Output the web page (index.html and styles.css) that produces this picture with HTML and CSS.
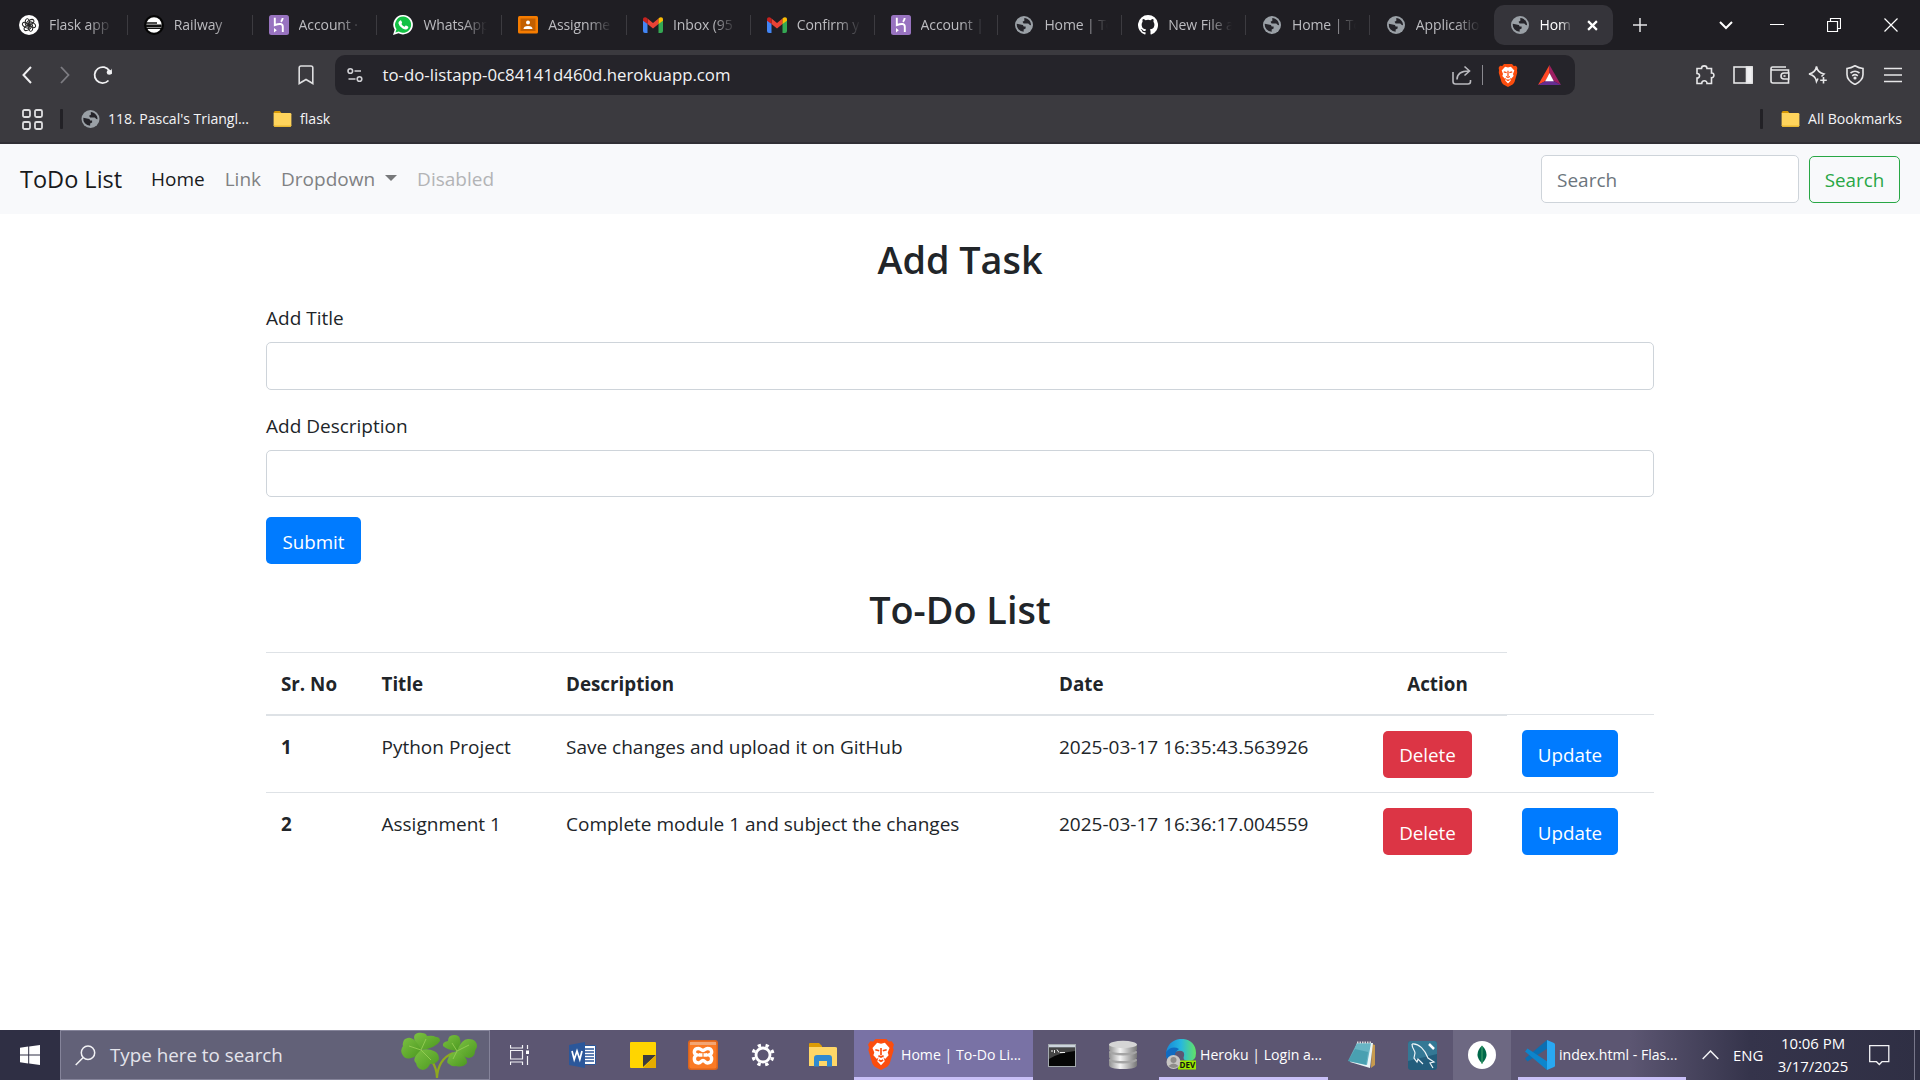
FILE: index.html
```html
<!DOCTYPE html>
<html lang="en">
<head>
<meta charset="utf-8">
<title>Home | To-Do List</title>
<link rel="stylesheet" href="styles.css">
</head>
<body>
<svg class="defs" aria-hidden="true">
  <symbol id="globe" viewBox="0 0 20 20"><circle cx="10" cy="10" r="10" fill="#9aa0a6"/><path d="M2 8.500 8.800 10l.8 1.800h2.200v2.200l-2.200 1v2.600A8 8 0 0 1 2 8.500M10.300 2.200c4.600.4 7.600 4 7.500 8l-1.300-.1-1.800-1.700H9.500L8.400 6.300l2-1.100z" fill="#25242a"/></symbol>
  <symbol id="heroku" viewBox="0 0 20 20"><rect width="20" height="20" rx="2.500" fill="#9873c0"/><path d="M5.800 2.800v7.400c5-2 8-1.600 8 1.500V17M13.700 3c-.1 1.500-.7 2.600-1.700 3.800" fill="none" stroke="#fff" stroke-width="1.900"/><path d="m5 13 2.800 2.200L5 17.400z" fill="#fff"/></symbol>
  <symbol id="gmail" viewBox="0 0 20 16"><path d="M0 3v11q0 2 2 2h2.500V6z" fill="#4285f4"/><path d="M20 3v11q0 2-2 2h-2.500V6z" fill="#34a853"/><path d="M4.500 1.500 10 6l5.500-4.500V7L10 11.500 4.500 7z" fill="#ea4335"/><path d="M0 2.500C0 0 2.500-.6 4.500 1.500V7L0 3.800z" fill="#c5221f"/><path d="M20 2.500c0-2.500-2.500-3.100-4.500-1V7L20 3.800z" fill="#fbbc04"/></symbol>
  <symbol id="folder" viewBox="0 0 20 18"><path d="M0 2q0-2 2-2h5l2 2.500H0z" fill="#d99a06"/><path d="M0 2.200h18.500q1.500 0 1.500 1.500v12.300q0 2-2 2H2q-2 0-2-2z" fill="#ffd45c"/><path d="M0 15.500q0 2.500 2 2.500h16q2 0 2-2v-.6q-.6 1-2 1H2q-1.500 0-2-.9" fill="#e9b832"/></symbol>
  <symbol id="brave" viewBox="0 0 20 24"><path d="M5.800 0h8.400l1.800 2 2.300-.3L20 4.300l-.7 2.200.5 2-3 10.300q-.5 1.500-2 2.600L10 24l-4.800-2.600q-1.500-1.100-2-2.600L.2 8.500l.5-2L0 4.300 1.700 1.700 4 2z" fill="#fb4d0e"/><path d="m10 3.600 3-.7 3.600 4-1.400 3.600.7 2-2.700 3-1.300-1.300 1 3L10 20.400 7.100 17.200l1-3-1.300 1.300-2.700-3 .7-2L3.400 6.900l3.600-4z" fill="#fff"/><path d="m5.600 8.300 3 .8M14.400 8.300l-3 .8M10 7v5.500M8 13l2 1 2-1M8.300 16.200l1.700 1 1.700-1" stroke="#fb4d0e" stroke-width="1.300" fill="none"/></symbol>
</svg>

<div class="browser">
  <div class="tabs">
    <div class="tab wide"><svg class="fav" viewBox="0 0 20 20"><circle cx="10" cy="10" r="10" fill="#fff"/><g fill="none" stroke="#222" stroke-width="1"><ellipse cx="8.300" cy="7.500" rx="2.200" ry="3.900"/><ellipse cx="8.300" cy="7.500" rx="2.200" ry="3.900" transform="rotate(60 10 10)"/><ellipse cx="8.300" cy="7.500" rx="2.200" ry="3.900" transform="rotate(120 10 10)"/><ellipse cx="8.300" cy="7.500" rx="2.200" ry="3.900" transform="rotate(180 10 10)"/><ellipse cx="8.300" cy="7.500" rx="2.200" ry="3.900" transform="rotate(240 10 10)"/><ellipse cx="8.300" cy="7.500" rx="2.200" ry="3.900" transform="rotate(300 10 10)"/></g></svg><span>Flask app</span></div>
    <div class="tab wide"><svg class="fav" viewBox="0 0 20 20"><circle cx="10" cy="10" r="10" fill="#050505"/><circle cx="10" cy="10" r="7.700" fill="#fff"/><path d="M2 8h11M2 10.200h15v1.300H2M3 13.300h14" stroke="#111" stroke-width="1.300" fill="none"/></svg><span>Railway</span></div>
    <div class="tab wide"><svg class="fav"><use href="#heroku"/></svg><span>Account ·</span></div>
    <div class="tab wide"><svg class="fav" viewBox="0 0 20 20"><path d="M10.300 0a9.700 9.700 0 1 1-4.800 18.200L0 20l1.700-5.300A9.700 9.700 0 0 1 10.300 0" fill="#fff"/><path d="M10.300 1.600a8.100 8.100 0 1 1-4.500 15l-3.400 1 1.100-3.300a8.100 8.100 0 0 1 6.800-12.700" fill="#12c143"/><path d="M7.200 5.400q.8-.3 1.200.6l.7 1.500q.2.500-.7 1.400 1.200 2.200 3.200 2.900l1-1.200q.3-.3 2.400.8 1 .6-.2 2.200-1.700 1.800-5.200-.2-3.600-2.200-4.200-5.200-.1-1.900 1.800-2.800" fill="#fff"/></svg><span>WhatsApp</span></div>
    <div class="tab wide"><svg class="fav" viewBox="0 0 20 20"><rect y="1" width="20" height="17.500" rx="1.500" fill="#f57c00"/><rect x="2.500" y="3.500" width="15" height="12.500" fill="#c35f00"/><circle cx="10" cy="7.500" r="2" fill="#fff"/><path d="M5.500 14q0-3 4.500-3t4.500 3z" fill="#fff"/></svg><span>Assignme</span></div>
    <div class="tab"><svg class="fav mail"><use href="#gmail"/></svg><span>Inbox (95</span></div>
    <div class="tab"><svg class="fav mail"><use href="#gmail"/></svg><span>Confirm y</span></div>
    <div class="tab"><svg class="fav"><use href="#heroku"/></svg><span>Account |</span></div>
    <div class="tab"><svg class="fav globe"><use href="#globe"/></svg><span>Home | To</span></div>
    <div class="tab"><svg class="fav" viewBox="0 0 16 16"><path fill="#fff" d="M8 0a8 8 0 0 0-2.530 15.590c.4.070.55-.17.55-.38v-1.490c-2.230.48-2.700-.95-2.700-.95-.36-.92-.89-1.170-.89-1.170-.73-.5.060-.49.060-.49.800.060 1.230.830 1.230.830.710 1.220 1.870.870 2.330.660.070-.52.280-.87.510-1.070-1.780-.2-3.640-.89-3.640-3.950 0-.87.310-1.590.820-2.150-.08-.2-.36-1.020.080-2.120 0 0 .67-.21 2.200.820a7.600 7.600 0 0 1 4 0c1.530-1.040 2.200-.82 2.200-.82.440 1.100.160 1.920.080 2.120.510.560.820 1.270.820 2.150 0 3.070-1.870 3.750-3.650 3.950.29.250.540.730.540 1.480v2.200c0 .21.150.46.550.38A8 8 0 0 0 8 0"/></svg><span>New File a</span></div>
    <div class="tab"><svg class="fav globe"><use href="#globe"/></svg><span>Home | To</span></div>
    <div class="tab plain"><svg class="fav globe"><use href="#globe"/></svg><span>Applicatio</span></div>
    <div class="tab active"><svg class="fav globe"><use href="#globe"/></svg><span>Hom</span><svg class="x" viewBox="0 0 10 10"><path d="m1 1 8 8M9 1 1 9" stroke="#fff" stroke-width="2"/></svg></div>
    <svg class="plus" viewBox="0 0 14 14"><path d="M7 0v14M0 7h14" stroke="#e4e4e6" stroke-width="1.500"/></svg>
    <div class="window-controls">
      <svg width="14" height="9" viewBox="0 0 14 9"><path d="m1 1 6 6 6-6" stroke="#fff" stroke-width="2" fill="none"/></svg>
      <svg width="14" height="14" viewBox="0 0 14 14"><path d="M0 6.500h14" stroke="#fff"/></svg>
      <svg width="14" height="14" viewBox="0 0 14 14"><path d="M.5 3.500h10v10H.5zM3.500 3.500v-3h10v10h-3" stroke="#fff" stroke-width="1.200" fill="none"/></svg>
      <svg width="14" height="14" viewBox="0 0 14 14"><path d="m.5.5 13 13M13.500.5l-13 13" stroke="#fff" stroke-width="1.200"/></svg>
    </div>
  </div>

  <div class="toolbar">
    <div class="nav-buttons">
      <svg width="12" height="18" viewBox="0 0 12 18"><path d="M10 1 2.500 9l7.500 8" stroke="#f0f0f2" stroke-width="2" fill="none"/></svg>
      <svg width="12" height="18" viewBox="0 0 12 18"><path d="m2 1 7.500 8L2 17" stroke="#7d7c82" stroke-width="1.800" fill="none"/></svg>
      <svg width="20" height="20" viewBox="0 0 20 20"><path d="M15.500 15.500A8 8 0 1 1 16.500 6" stroke="#f0f0f2" stroke-width="1.800" fill="none"/><circle cx="16.300" cy="7.300" r="2.500" fill="#f0f0f2"/><path d="M18.800 3.600V9h-3z" fill="#f0f0f2"/></svg>
    </div>
    <svg class="mark" width="16" height="20" viewBox="0 0 16 20"><path d="M3 1h10q1.800 0 1.800 1.800V18.500L8 14.500 1.200 18.500V2.800Q1.200 1 3 1z" fill="none" stroke="#dedee0" stroke-width="1.600"/></svg>
    <div class="address">
      <svg class="tune" width="16" height="16" viewBox="0 0 16 16"><g fill="none" stroke="#d0d0d4" stroke-width="1.600"><circle cx="3.300" cy="4" r="2.300"/><path d="M7.500 4H14M1.500 12h7"/><circle cx="12.500" cy="12" r="2.300"/></g></svg>
      <span class="url">to-do-listapp-0c84141d460d.herokuapp.com</span>
      <svg class="share" width="20" height="20" viewBox="0 0 20 20"><path d="M1 7v9.500Q1 19 3.500 19H16q2.500 0 2.500-2.500V15M5 14.500C5 8.500 9 6 17 6M12.500 1.500 17.500 6l-5 4.500" fill="none" stroke="#b9b9be" stroke-width="1.600"/></svg>
      <i class="rule"></i>
      <svg class="lion" width="20" height="23" viewBox="0 0 20 24"><use href="#brave"/></svg>
      <svg width="23" height="20" viewBox="0 0 23 20"><path d="M11.500 0 0 20l7.500-4 4-8z" fill="#ff4724"/><path d="M11.500 0 23 20l-7.500-4-4-8z" fill="#9e1f63"/><path d="M0 20h23l-7.500-4h-8z" fill="#662d91"/><path d="m11.500 8 4.300 8.200H7.200z" fill="#fff"/></svg>
    </div>
    <div class="extensions">
      <svg width="20" height="20" viewBox="0 0 20 20"><path d="M2 3.500h4.500C6.500 0 12 0 12 3.500h4.500V8c3.200-.5 3.200 5 0 4.700V18.500H12c.3-3.600-5.300-3.600-5.300 0H2V13c3.400.2 3.400-4.700 0-4.500z"/></svg>
      <svg width="20" height="20" viewBox="0 0 20 20"><rect x="1" y="2" width="18" height="16"/><path d="M13.500 2H19v16h-5.500z" fill="#f0f0f2"/></svg>
      <svg width="20" height="20" viewBox="0 0 20 20"><path d="M18.500 8V5h-16Q1 5 1 3.500T2.500 2H16M1 3.500V16q0 2 2 2h15.500v-4M18.800 8v6H14q-3 0-3-3t3-3z"/><path d="M13.500 11h2"/></svg>
      <svg width="20" height="20" viewBox="0 0 20 20"><path d="M13.500 11.500 16 9Q9.500 7.500 8.500 1.500 7.500 7.500 1 9q6.500 1.500 7.500 7.500l1.500-3M15.500 12v6.500M12.200 15.200h6.600"/></svg>
      <svg width="20" height="20" viewBox="0 0 20 20"><path d="M10 .8q4 2.400 8 2.700v6q0 6-8 10-8-4-8-10v-6q4-.3 8-2.700z"/><path d="M5.500 8q4.500-3.500 9 0M7.200 10.800q2.800-2.300 5.600 0"/><circle cx="10" cy="13" r=".8"/></svg>
      <svg width="20" height="20" viewBox="0 0 20 20"><path d="M1 3.500h18M1 10h18M1 16.500h18"/></svg>
    </div>
  </div>

  <div class="bookmarks">
    <svg width="21" height="21" viewBox="0 0 21 21"><g fill="none" stroke="#dedee0" stroke-width="1.800"><rect x="1" y="1" width="7" height="7" rx="1.500"/><rect x="13" y="1" width="7" height="7" rx="1.500"/><rect x="1" y="13" width="7" height="7" rx="1.500"/><rect x="13" y="13" width="7" height="7" rx="1.500"/></g></svg>
    <i class="bar"></i>
    <svg class="bm-globe"><use href="#globe"/></svg>
    <span class="bm-pascal">118. Pascal's Triangl...</span>
    <svg class="bm-folder"><use href="#folder"/></svg>
    <span>flask</span>
    <div class="bm-right"><i class="bar"></i><svg class="bm-folder"><use href="#folder"/></svg><span class="bm-all">All Bookmarks</span></div>
  </div>
</div>

<div class="page">
  <nav class="navbar">
    <a class="brand">ToDo List</a>
    <a class="link current">Home</a>
    <a class="link">Link</a>
    <a class="link drop">Dropdown</a>
    <a class="link disabled">Disabled</a>
    <form class="search-form">
      <input type="text" placeholder="Search">
      <button type="button" class="btn outline">Search</button>
    </form>
  </nav>

  <main class="container">
    <h2>Add Task</h2>
    <form class="task-form">
      <label for="title">Add Title</label>
      <input id="title" type="text">
      <label for="desc">Add Description</label>
      <input id="desc" type="text">
      <button type="button" class="btn primary submit">Submit</button>
    </form>
    <h2 class="list-title">To-Do List</h2>
    <table>
      <colgroup><col class="c1"><col class="c2"><col class="c3"><col class="c4"><col class="c5"><col class="c6"></colgroup>
      <thead>
        <tr><th>Sr. No</th><th>Title</th><th>Description</th><th>Date</th><th class="action">Action</th></tr>
      </thead>
      <tbody>
        <tr><th>1</th><td>Python Project</td><td>Save changes and upload it on GitHub</td><td class="date">2025-03-17 16:35:43.563926</td><td><button type="button" class="btn danger">Delete</button></td><td><button type="button" class="btn primary update">Update</button></td></tr>
        <tr><th>2</th><td>Assignment 1</td><td>Complete module 1 and subject the changes</td><td class="date">2025-03-17 16:36:17.004559</td><td><button type="button" class="btn danger">Delete</button></td><td><button type="button" class="btn primary update">Update</button></td></tr>
      </tbody>
    </table>
  </main>
</div>

<div class="taskbar">
  <div class="start"><svg width="20" height="20" viewBox="0 0 20 20"><path d="M0 2.800 8.200 1.600v7.800H0zM9.200 1.400 20 0v9.400H9.200zM0 10.400h8.200v8L0 17.200zM9.200 10.400H20V20L9.200 18.500z" fill="#fff"/></svg></div>
  <div class="search">
    <svg width="21" height="21" viewBox="0 0 21 21"><circle cx="13" cy="7.700" r="6.700" fill="none" stroke="#f2f2f5" stroke-width="1.500"/><path d="M8.200 12.500.7 20" stroke="#f2f2f5" stroke-width="1.500"/></svg>
    <span>Type here to search</span>
    <svg class="clover" width="76" height="46" viewBox="0 0 76 46">
      <defs><linearGradient id="leaf" x1="0" y1="0" x2="1" y2="1"><stop offset="0" stop-color="#7cc142"/><stop offset="1" stop-color="#4b981f"/></linearGradient></defs>
      <path d="M30 28q6 8 6 18M52 21Q37 27 36 46" fill="none" stroke="#8fa81f" stroke-width="2.200"/>
      <g fill="url(#leaf)"><path d="M20 18C8 4 14 0 21 1q4 0 5 3 6-1 9 1 4 0 4 4-4 7-19 9"/><path d="M20 18C14 4 7 4 3 8q-2 4-1 6-3 4-1 8 3 6 9 4 6-1 10-8"/><path d="M20 18q-10 9-5 13 1 6 7 7 5-1 7-6 7 0 9-5 0-6-5-8-6-3-13-1"/>
      <path d="M56 19Q46 18 42 14q-1-4 5-5 0-6 6-6 6 0 6 5 2 3-3 11"/><path d="M56 19q5-13 12-12 8 0 8 8-1 2-2 4 0 6-6 7-5 0-12-7"/><path d="M56 19q-8 2-9 8-2 4 1 5 3 3 7 2 7 2 11-3 1-6-10-12"/></g>
      <path d="m20 18 5-11M20 18 8 14M20 18l10 10M56 19l-5-8M56 19l12-6M56 19l-4 8" stroke="#9bd158" stroke-width=".8"/>
    </svg>
  </div>
  <div class="apps">
    <svg class="i1" width="20" height="20" viewBox="0 0 20 20"><path d="M.5 0v3h12V0M.5 20v-3h12v3M.5 5.500h12v8.500H.5zM17.500 0v4M17.500 11v9" fill="none" stroke="#f2f2f5" stroke-width="1.200"/><path d="M16 5.500h3v3.500h-3z" fill="#fff"/></svg>
    <svg class="i2" width="28" height="26" viewBox="0 0 28 26"><path d="M15 3.500h11.500v19H15z" fill="#fff" stroke="#2b579a"/><path d="M16 7h9M16 10h9M16 13h9M16 16h9M16 19h9" stroke="#2b579a" stroke-width="1.300"/><path d="M0 3 16 0v26L0 23z" fill="#2b579a"/><path d="m3 9 2.200 8.500L8 9l2.800 8.500L13 9" fill="none" stroke="#fff" stroke-width="1.700"/></svg>
    <svg class="i3" width="26" height="26" viewBox="0 0 26 26"><rect width="26" height="26" rx="1" fill="#ffd500"/><path d="M13 13h13L13 25z" fill="#3b3b3d"/><path d="M26 13v13H13z" fill="#e5ac00"/></svg>
    <svg class="i4" width="30" height="30" viewBox="0 0 30 30"><rect width="30" height="30" rx="3" fill="#d8641f"/><rect x="1.500" y="1.500" width="27" height="27" rx="2" fill="#fb7a24"/><path d="M2 2h26v3H2z" fill="#f3a573"/><path d="M10.500 8.500c2.500 0 2.500 2 4.500 2s2-2 4.500-2c5 0 5.500 5.500 1.500 6.500 4 1.500 3.500 8-1.500 8-2.500 0-2.500-2.500-4.500-2.500s-2 2.500-4.500 2.500c-5 0-5.500-6.500-1.500-8-4-1-3.500-6.500 1.500-6.500zM11 15h3.500M15.500 15H19" fill="none" stroke="#fff" stroke-width="3.400"/></svg>
    <svg class="i5" width="24" height="24" viewBox="0 0 24 24"><circle cx="12" cy="12" r="7" fill="none" stroke="#fff" stroke-width="2.800"/><circle cx="12" cy="12" r="10" fill="none" stroke="#fff" stroke-width="3.200" stroke-dasharray="3.300 4.554" transform="rotate(13 12 12)"/></svg>
    <svg class="i6" width="28" height="24" viewBox="0 0 28 24"><path d="M0 1q0-1 1-1h9l3 3v4H0z" fill="#dc9c05"/><path d="M0 4h26q2 0 2 1v18H0z" fill="#ffd767"/><path d="M5 23.500V15q0-3 3-3h12q3 0 3 3v8.500h-5V18h-8v5.500z" fill="#318ad0"/></svg>
    <div class="task current"><svg width="26" height="31" viewBox="0 0 20 24"><use href="#brave"/></svg><span>Home | To-Do Li...</span></div>
    <svg class="i7" width="28" height="23" viewBox="0 0 28 23"><rect x=".5" y=".5" width="27" height="22" fill="#060606" stroke="#a3a9ae"/><path d="M1 1h26v2.500H1z" fill="#ccd4dc"/><path d="M1 4h26v3Q10 9 1 15z" fill="#444"/><path d="M3 7h2M6.500 6v3M9 5.500l2 3M12 8.500h5" stroke="#eee"/></svg>
    <svg class="i8" width="30" height="30" viewBox="0 0 30 30"><defs><linearGradient id="disk"><stop stop-color="#909090"/><stop offset=".4" stop-color="#f4f4f4"/><stop offset="1" stop-color="#777"/></linearGradient></defs><g fill="url(#disk)"><path d="M1 20v5q0 4 14 4t14-4v-5z"/><ellipse cx="15" cy="20" rx="14" ry="3.500" fill="#a5a5a5"/><path d="M1 12v5q0 4 14 4t14-4v-5z"/><ellipse cx="15" cy="12" rx="14" ry="3.500" fill="#a5a5a5"/><path d="M1 4v5q0 4 14 4t14-4V4z"/></g><ellipse cx="15" cy="4.500" rx="14" ry="3.700" fill="#d5d5d5"/></svg>
    <div class="task heroku"><svg width="30" height="31" viewBox="0 0 30 31"><defs><linearGradient id="edge"><stop stop-color="#1788d8"/><stop offset=".5" stop-color="#27b7df"/><stop offset="1" stop-color="#63e365"/></linearGradient></defs><path d="M0 15C1-5 30-5 30 14q0 8-7 8-7 0-5-5 1-6-6-5-7 1-5 12Q0 22 0 15" fill="url(#edge)"/><path d="M0 13Q6 6 13 10 8 13 9 19q1 6 8 8-14 3-17-10z" fill="#116bc1"/><rect x="12" y="21.500" width="18" height="9" fill="#9be800"/><circle cx="7.500" cy="23" r="7" fill="#c8c6c4"/><circle cx="7.500" cy="21" r="3" fill="#8f8c8a"/><path d="M2.500 27q5-5 10 0-5 4-10 0" fill="#8f8c8a"/><text x="13.500" y="29" class="dev">DEV</text></svg><span>Heroku | Login a...</span></div>
    <svg class="i9" width="29" height="28" viewBox="0 0 29 28"><path d="m24 3 3 1v20l-4 3z" fill="#c69a4e"/><path d="M9 2h16l-3 25-20-6z" fill="#e9f5f7"/><path d="M9 2h14l-4 22L0 20z" fill="#68b5c4"/><path d="m7 8 13 3-2 13L0 20z" fill="#2f8ea3" opacity=".55"/><path d="M9 1.500h15" stroke="#d9d9d9" stroke-width="2" stroke-dasharray="1.500 1"/></svg>
    <svg class="i10" width="29" height="29" viewBox="0 0 29 29"><rect width="29" height="29" rx="3" fill="#235d7c"/><path d="M0 3q0-3 3-3h23q3 0 3 3v10L0 20z" fill="#347895"/><path d="M4 3c7-1 13 6 16 14l6 4-4 1 3 5M4 3c0 5 3 6 3 9l-1 5 3 4 1-3 5 5" fill="none" stroke="#eef5f8" stroke-width="1.200"/><path d="m21 3 5 5" stroke="#fff" stroke-width="2.500"/></svg>
    <div class="mongo"><svg width="28" height="28" viewBox="0 0 28 28"><circle cx="14" cy="14" r="14" fill="#fff"/><path d="M14 4.500q9 9 0 18-9-9 0-18" fill="#00684a"/><path d="M14 5v18" stroke="#47a56f"/></svg></div>
    <div class="task code"><svg width="30" height="30" viewBox="0 0 30 30"><path d="M0 18.500 22 0l1 8L2.500 21.500z" fill="#0b6fb2"/><path d="M0 11.500 2.500 8.500 23 22l-1 8z" fill="#0d85cc"/><path d="m22 0 7 3q1 .5 1 1.500v21q0 1-1 1.500l-7 3z" fill="#29a8f2"/></svg><span>index.html - Flas...</span></div>
  </div>
  <div class="tray">
    <svg width="17" height="10" viewBox="0 0 17 10"><path d="m.7 9 7.800-8 7.800 8" fill="none" stroke="#f2f2f5" stroke-width="1.500"/></svg>
    <span class="lang">ENG</span>
    <div class="clock"><span>10:06 PM</span><span>3/17/2025</span></div>
    <svg class="note" width="21" height="21" viewBox="0 0 21 21"><path d="M.7.700h19.100v16H13L10.300 19.500 7.500 16.700H.7z" fill="none" stroke="#f2f2f5" stroke-width="1.300"/></svg>
    <i></i>
  </div>
</div>
</body>
</html>
```
FILE: styles.css
```css
* { box-sizing: border-box; }
html, body { margin: 0; height: 100%; overflow: hidden; }
body {
  display: flex; flex-direction: column;
  width: 1920px; height: 1080px;
  background: #fff; color: #212529;
  font-family: "Open Sans", "Noto Sans", sans-serif;
  font-size: 19px; line-height: 30px;
}
svg { display: block; flex: none; }
span { white-space: nowrap; }
.defs { position: absolute; width: 0; height: 0; }

/* browser chrome */
.browser { flex: none; height: 144px; background: #3b3a3f; border-bottom: 2px solid #302f35; color: #f4f4f6; }
.tabs { display: flex; align-items: center; height: 50px; padding-left: 3px; background: #1f1e23; }
.tab { display: flex; align-items: center; flex: none; width: 123.800px; height: 20px; padding-left: 16px; border-right: 1px solid #3c3b40; font-size: 14px; letter-spacing: -0.1px; color: #bcbcc0; }
.tab.wide { width: 124.800px; }
.tab span { width: 64px; margin-left: 10px; -webkit-mask-image: linear-gradient(90deg, #000 62%, transparent); mask-image: linear-gradient(90deg, #000 62%, transparent); }
.fav { width: 20px; height: 20px; }
.fav.mail { height: 16px; }
.fav.globe { height: 18px; }
.tab.plain { border-right: 0; }
.tab.active { width: 119px; height: 40px; padding-left: 16px; border: 0; border-radius: 10px; background: #35343a; color: #fff; }
.tab.active span { width: 33px; }
.tab.active .x { width: 11px; height: 11px; margin-left: 14px; }
.plus { width: 14px; height: 14px; margin-left: 20px; }
.window-controls { display: flex; align-items: center; margin-left: auto; padding-right: 22px; gap: 43px; }
.window-controls svg:first-child { margin-right: -6px; }

.toolbar { display: flex; align-items: center; height: 50px; }
.nav-buttons { display: flex; align-items: center; gap: 26px; width: 298px; padding-left: 21px; }
.nav-buttons svg:last-child { margin-left: -4px; }
.mark { margin-right: 21px; }
.address { display: flex; align-items: center; width: 1240px; height: 40px; padding: 0 14px 0 12px; border-radius: 10px; background: #25242a; color: #f2f2f4; font-size: 16.800px; }
.url { margin-left: 19.500px; }
.share { margin-left: auto; }
.rule { width: 1px; height: 20px; margin: 0 15px 0 10px; background: #8a898f; }
.lion { margin-right: 20px; }
.extensions { display: flex; gap: 17.600px; margin-left: 120px; fill: none; stroke: #e6e6e8; stroke-width: 1.600; }

.bookmarks { display: flex; align-items: center; height: 38px; padding: 0 18px 0 22px; font-size: 14.100px; }
.bar { width: 3px; height: 20px; background: #222126; border-radius: 1px; }
.bookmarks > .bar { margin: 0 18px 0 17px; }
.bm-globe { width: 19px; height: 18px; margin-right: 8px; }
.bm-pascal { width: 165px; letter-spacing: -0.05px; }
.bm-folder { width: 19px; height: 16px; margin-right: 8px; }
.bm-right { display: flex; align-items: center; margin-left: auto; }
.bm-right .bm-folder { margin-left: 18px; }
.bm-all { width: 94px; }

/* page */
.page { flex: 1; min-height: 0; }
.navbar { display: flex; align-items: center; height: 70px; padding: 0 20px; background: #f8f9fb; line-height: 32px; }
.brand { width: 121px; font-size: 23.500px; color: #181a1c; }
.link { padding: 0 10px; color: #808183; }
.link.current { color: #181a1c; }
.link.disabled { color: #b3b4b6; }
.drop::after { content: ""; display: inline-block; margin-left: 10px; vertical-align: 5px; border: 6px solid transparent; border-top-color: #77787a; border-bottom: 0; }
.search-form { display: flex; align-items: center; gap: 10px; margin-left: auto; }
input { display: block; width: 100%; height: 47.500px; padding: 2px 15px 0; border: 1px solid #ced4da; border-radius: 5px; background: #fff; font: inherit; color: #495057; }
input::placeholder { color: #6c757d; opacity: 1; }
.search-form input { width: 258px; }
.btn { display: block; height: 47px; padding: 2px 0 0; border: 1px solid transparent; border-radius: 5px; font: inherit; font-size: 18.800px; color: #fff; text-align: center; }
.outline { width: 91px; margin-top: 1px; padding-top: 0; border-color: #28a745; color: #28a745; background: transparent; }
.primary { background: #007bff; }
.danger { width: 89px; background: #dc3545; }
.submit { width: 95px; }
.update { width: 96px; }

.container { width: 1388px; margin: 0 auto; padding-top: 22px; }
h2 { margin: 0; font-size: 37.800px; font-weight: 600; line-height: 48px; text-align: center; }
.task-form { padding-top: 18px; }
.task-form label { display: block; height: 30px; margin-bottom: 10px; line-height: 32px; }
.task-form input { margin-bottom: 20px; }
.list-title { margin-top: 21.500px; }
table { width: 1388px; margin-top: 18px; border-collapse: collapse; table-layout: fixed; }
.c1 { width: 100.500px; } .c2 { width: 184.500px; } .c3 { width: 493px; } .c4 { width: 324px; } .c5 { width: 139px; } .c6 { width: 147px; }
th, td { height: 78px; padding: 15px; border-top: 1px solid #dee2e6; text-align: left; vertical-align: top; white-space: nowrap; line-height: 32px; }
td { padding-bottom: 14px; }
th { font-weight: 700; font-size: 18.800px; }
thead th { height: auto; padding-bottom: 14px; border-bottom: 2px solid #dee2e6; }
th.action { text-align: center; }

/* taskbar */
.taskbar { display: flex; flex: none; height: 50px; color: #fff; background: linear-gradient(90deg, #2f2f44 0, #2f2f44 60px, #5c5672 490px, #5c5672 1630px, #35344b 1750px, #2f2f44 100%); }
.start { display: flex; align-items: center; width: 60px; padding-left: 20px; }
.search { display: flex; align-items: center; width: 430px; padding: 0 12px 0 14px; border: 1px solid #85849a; background: #626178; color: #e4e4ec; font-size: 18.800px; }
.search span { margin-left: 14px; }
.clover { margin-left: auto; }
.apps { display: flex; align-items: center; width: 1196px; font-size: 14.100px; }
.i1 { margin-left: 20px; } .i2 { margin-left: 39px; } .i3 { margin-left: 33px; } .i4 { margin-left: 32px; }
.i5 { margin-left: 33px; } .i6 { margin-left: 34px; } .i7 { margin-left: 15px; } .i8 { margin-left: 32px; }
.i9 { margin-left: 20px; } .i10 { margin-left: 31px; }
.task { display: flex; align-items: center; height: 50px; border-bottom: 3px solid #c9c0f8; }
.task svg { margin-top: 2px; }
.task span { margin: 3px 0 0 7px; }
.task.current { width: 179px; margin-left: 17px; padding-left: 14px; background: #7972a5; }
.task.heroku { width: 169px; margin-left: 21px; padding-left: 7px; }
.task.heroku span { margin-left: 4px; }
.dev { font: 700 8px "Open Sans", sans-serif; fill: #111; }
.mongo { display: flex; align-items: center; justify-content: center; width: 58px; height: 50px; margin-left: 16px; background: #6d6882; }
.task.code { width: 168px; margin-left: 7px; padding-left: 7px; }
.task.code span { margin-left: 4px; }
.tray { display: flex; align-items: center; flex: 1; padding-left: 16px; font-size: 14.900px; }
.lang { width: 30px; margin-left: 14px; }
.clock { display: flex; flex-direction: column; align-items: center; width: 100px; line-height: 23px; }
.note { margin-left: 6px; }
.tray i { width: 1px; height: 50px; margin-left: auto; margin-right: 5px; background: #77768a; }
```
